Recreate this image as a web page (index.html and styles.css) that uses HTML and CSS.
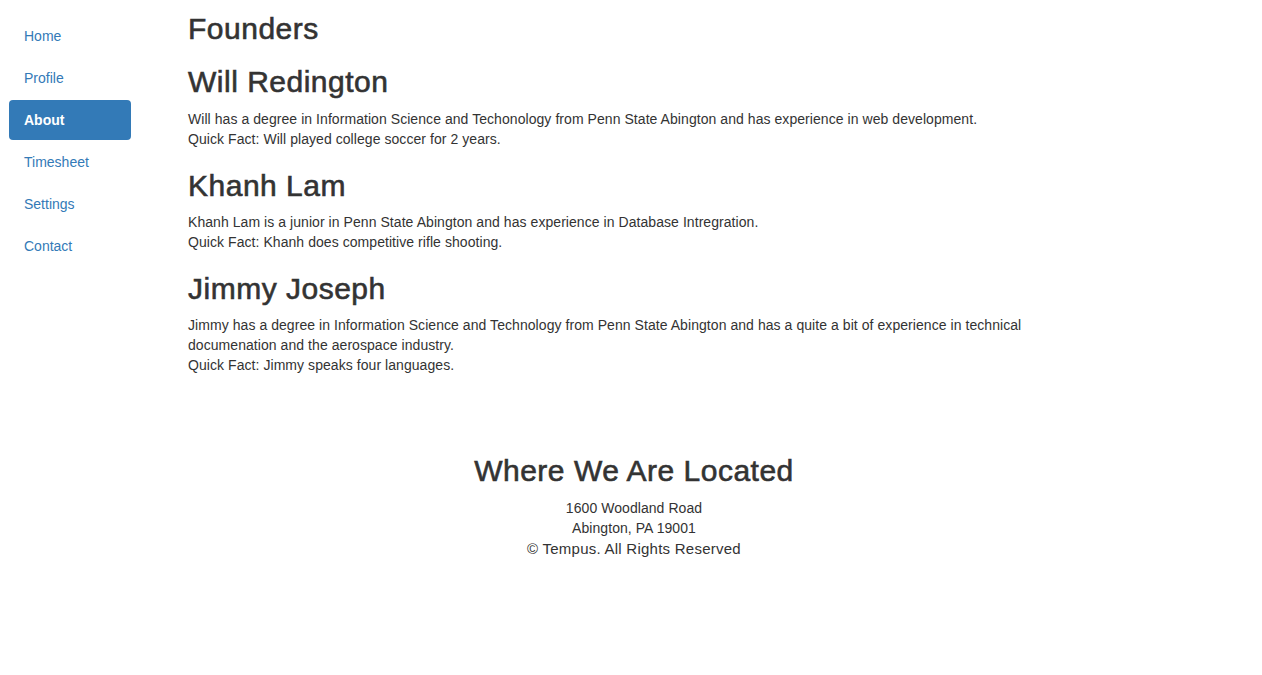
FILE: index.html
```html
<!DOCTYPE html>
<html lang="en">
<head>
<meta charset="utf-8">
<title>About - Tempus</title>
<link rel="stylesheet" href="styles.css">
</head>
<body>
<div class="page">
  <nav class="sidenav">
    <a class="pill" href="#">Home</a>
    <a class="pill" href="#">Profile</a>
    <a class="pill active" href="#">About</a>
    <a class="pill" href="#">Timesheet</a>
    <a class="pill" href="#">Settings</a>
    <a class="pill" href="#">Contact</a>
  </nav>
  <main class="content">
    <h2 class="title">Founders</h2>
    <h2>Will Redington</h2>
    <p>Will has a degree in Information Science and Techonology from Penn State Abington and has experience in web development.<br>Quick Fact: Will played college soccer for 2 years.</p>
    <h2>Khanh Lam</h2>
    <p>Khanh Lam is a junior in Penn State Abington and has experience in Database Intregration.<br>Quick Fact: Khanh does competitive rifle shooting.</p>
    <h2>Jimmy Joseph</h2>
    <p>Jimmy has a degree in Information Science and Technology from Penn State Abington and has a quite a bit of experience in technical documenation and the aerospace industry.<br>Quick Fact: Jimmy speaks four languages.</p>
  </main>
</div>
<footer class="footer">
  <h2>Where We Are Located</h2>
  <p>1600 Woodland Road<br>Abington, PA 19001</p>
  <p class="copy">© Tempus. All Rights Reserved</p>
</footer>
</body>
</html>
```

FILE: styles.css
```css
html, body {
  margin: 0;
  padding: 0;
  background: #fff;
}
body {
  font-family: "Liberation Sans", Arial, sans-serif;
  font-size: 14px;
  line-height: 20px;
  color: #333;
  letter-spacing: 0.06px;
}
.page {
  display: flex;
  align-items: flex-start;
}
.sidenav {
  display: flex;
  flex-direction: column;
  gap: 2px;
  width: 122px;
  margin-left: 9px;
  padding-top: 16px;
  flex-shrink: 0;
}
.pill {
  display: block;
  padding: 10px 15px;
  line-height: 20px;
  color: #337ab7;
  text-decoration: none;
  border-radius: 4px;
  letter-spacing: 0;
}
.pill.active {
  background: #337ab7;
  color: #fff;
  font-weight: bold;
}
.content {
  margin-left: 57px;
  width: 850px;
}
h2 {
  font-size: 30px;
  line-height: 33px;
  font-weight: 500;
  letter-spacing: 0.5px;
  -webkit-text-stroke: 0.6px #333;
  margin: 20px 0 10px;
}
.content .title {
  margin-top: 12px;
}
p {
  margin: 0;
  padding-top: 1px;
}
.content p + h2 {
  margin-top: 20px;
  margin-bottom: 9px;
}
.footer {
  text-align: center;
  margin-top: 79px;
  padding-left: 6px;
}
.footer h2 {
  margin-top: 0;
}
.footer .copy {
  font-size: 15px;
  line-height: 22px;
  padding-top: 0;
  letter-spacing: 0.25px;
}
```
